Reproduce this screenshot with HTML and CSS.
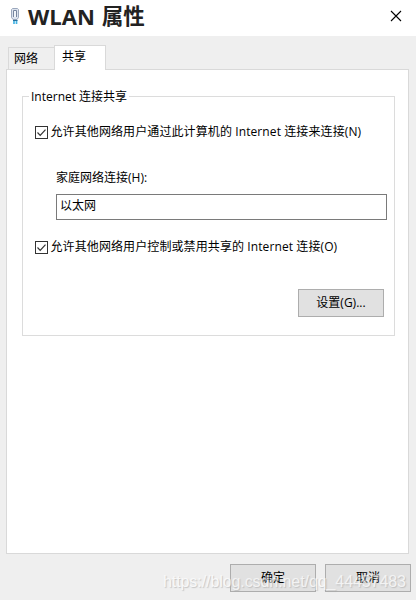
FILE: index.html
```html
<!DOCTYPE html>
<html lang="zh-CN">
<head>
<meta charset="utf-8">
<title>WLAN 属性</title>
<link rel="stylesheet" href="styles.css">
</head>
<body>
<div class="dialog">
  <header class="titlebar">
    <svg class="device" width="10" height="17" viewBox="0 0 10 17">
      <path d="M1.5 1.5L2.5.5h5l1 1v8l-1.5 2H3l-1.500-2z" fill="#dce3ee" stroke="#9aa7bc"/>
      <path d="M3.500 9V2.500h3V9" fill="#f1f5fa" stroke="#76859e"/>
      <path d="M4 12v4M6.500 12v4" stroke="#45b4e4" stroke-width="1.700"/>
      <path d="M3 12.500h4.500" stroke="#246f9c"/>
    </svg>
    <h1><span>WLAN</span><span class="cjk">属性</span></h1>
    <svg class="close" width="12" height="12" viewBox="0 0 12 12"><path d="M1 1l10 10M11 1L1 11" stroke="#000" stroke-width="1.100"/></svg>
  </header>
  <nav class="tabs">
    <div class="tab">网络</div>
    <div class="tab active">共享</div>
  </nav>
  <main class="panel">
    <fieldset class="group">
      <legend>Internet 连接共享</legend>
      <label class="check"><svg width="13" height="13" viewBox="0 0 13 13"><rect x=".5" y=".5" width="12" height="12" fill="#fff" stroke="#333"/><path d="M2.500 6.500l2.700 2.800 5.300-5.600" fill="none" stroke="#333" stroke-width="1.200"/></svg><span class="raised-half">允许其他网络用户通过此计算机的 Internet 连接来连接(N)</span></label>
      <div class="field-label">家庭网络连接(H):</div>
      <div class="field">以太网</div>
      <label class="check"><svg width="13" height="13" viewBox="0 0 13 13"><rect x=".5" y=".5" width="12" height="12" fill="#fff" stroke="#333"/><path d="M2.500 6.500l2.700 2.800 5.300-5.600" fill="none" stroke="#333" stroke-width="1.200"/></svg><span class="raised">允许其他网络用户控制或禁用共享的 Internet 连接(O)</span></label>
      <div class="button settings">设置(G)...</div>
    </fieldset>
  </main>
  <footer class="actions">
    <div class="button">确定</div>
    <div class="button">取消</div>
    <div class="watermark">https://blog.csdn.net/qq_44457483</div>
  </footer>
</div>
</body>
</html>
```
FILE: styles.css
```css
* { box-sizing: border-box; }
body {
  margin: 0;
  background: #efefef;
  color: #000;
  font: 12px/16px "Open Sans", "Noto Sans CJK SC", sans-serif;
  white-space: nowrap;
}
.dialog { width: 416px; height: 600px; display: flex; flex-direction: column; overflow: hidden; }
.titlebar { height: 36px; flex: none; background: #fff; display: flex; align-items: flex-start; padding-left: 10px; }
.device { margin-top: 8px; }
h1 { margin: 0 0 0 8px; display: flex; gap: 7px; color: #222; font-size: 22px; line-height: 32px; font-weight: 700; }
.cjk { font-size: 21.5px; }
.close { margin: 10px 14px 0 auto; }
.tabs { display: flex; align-items: flex-end; height: 34px; flex: none; padding-left: 8px; position: relative; margin-bottom: -1px; }
.tab { width: 47px; height: 23px; border: 1px solid #d9d9d9; padding: 3px 0 0 5px; }
.tab.active { width: 52px; height: 25px; margin-left: -1px; background: #fff; border-bottom: 0; padding: 3px 0 0 7px; }
.panel { width: 403px; height: 485px; flex: none; margin-left: 6px; padding: 18px 0 0 15px; background: #fff; border: 1px solid #d9d9d9; }
.group { margin: 0; width: 373px; height: 248px; border: 1px solid #dcdcdc; padding: 20px 0 0 12px; min-width: 0; }
legend { margin-left: -6px; padding: 1px 2px 0; height: 16px; }
.check { display: flex; align-items: center; gap: 2.5px; height: 16px; letter-spacing: .1px; }
.raised { margin-top: -1px; }
.raised-half { margin-top: -1px; }
.field-label { margin: 30px 0 0 21px; }
.field { width: 331px; height: 26px; margin: 8px 0 19px 21px; border: 1px solid #7a7a7a; padding: 3px 0 0 3px; }
.button { width: 86px; height: 28px; border: 1px solid #adadad; background: #e1e1e1; text-align: center; line-height: 26px; }
.settings { margin: 34px 0 0 263px; }
.actions { position: relative; display: flex; justify-content: flex-end; gap: 9px; padding: 10px 5px 0 0; }
.watermark { position: absolute; left: 163px; top: 19px; color: #fff; opacity: .6; font: 16px/18px "Liberation Sans", sans-serif; letter-spacing: -.08px; text-shadow: 1px 1px 1px #aaa; }
```
